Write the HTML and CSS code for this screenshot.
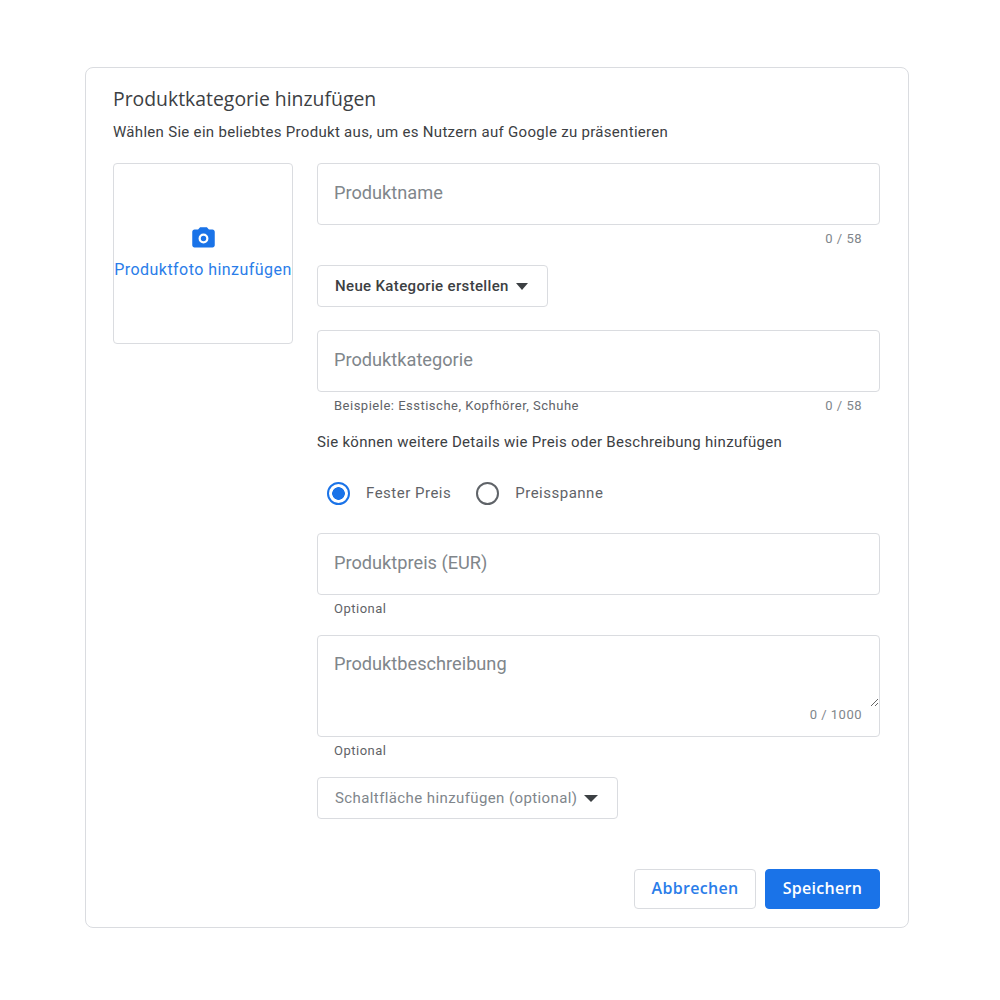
FILE: index.html
```html
<!DOCTYPE html>
<html lang="de">
<head>
<meta charset="utf-8">
<title>Produktkategorie hinzufügen</title>
<link rel="stylesheet" href="styles.css">
</head>
<body>
<main class="card">
  <h1 class="title">Produktkategorie hinzufügen</h1>
  <p class="subtitle">Wählen Sie ein beliebtes Produkt aus, um es Nutzern auf Google zu präsentieren</p>
  <div class="columns">
    <button class="photo" type="button">
      <svg class="camera" width="27" height="27" viewBox="0 0 24 24" aria-hidden="true"><path fill="#1a73e8" fill-rule="evenodd" d="M9 2 7.17 4H4c-1.1 0-2 .9-2 2v12c0 1.1.9 2 2 2h16c1.1 0 2-.9 2-2V6c0-1.1-.9-2-2-2h-3.17L15 2H9zm3 14.4a4.4 4.4 0 1 1 0-8.8 4.4 4.4 0 0 1 0 8.8z"/><circle cx="12" cy="12" r="2.4" fill="#1a73e8"/></svg>
      <span>Produktfoto hinzufügen</span>
    </button>
    <form class="fields">
      <input class="field" type="text" placeholder="Produktname">
      <div class="hints"><span></span><span class="count">0 / 58</span></div>
      <button class="dropdown dark gap-cat" type="button">Neue Kategorie erstellen<i class="caret"></i></button>
      <input class="field gap-field" type="text" placeholder="Produktkategorie">
      <div class="hints"><span>Beispiele: Esstische, Kopfhörer, Schuhe</span><span class="count">0 / 58</span></div>
      <p class="note">Sie können weitere Details wie Preis oder Beschreibung hinzufügen</p>
      <div class="radios">
        <label class="radio"><input type="radio" name="price" checked><span>Fester Preis</span></label>
        <label class="radio"><input type="radio" name="price"><span>Preisspanne</span></label>
      </div>
      <input class="field" type="text" placeholder="Produktpreis (EUR)">
      <div class="hints"><span>Optional</span></div>
      <div class="area-box">
        <textarea class="area" placeholder="Produktbeschreibung"></textarea>
        <div class="area-count">0 / 1000</div>
      </div>
      <div class="hints"><span>Optional</span></div>
      <button class="dropdown muted gap-btn" type="button">Schaltfläche hinzufügen (optional)<i class="caret"></i></button>
      <div class="actions">
        <button class="action cancel" type="button">Abbrechen</button>
        <button class="action save" type="button">Speichern</button>
      </div>
    </form>
  </div>
</main>
</body>
</html>
```
FILE: styles.css
```css
* { box-sizing: border-box; }
html, body { margin: 0; padding: 0; background: #fff; }
body { padding: 67px 0 0 85px; font-family: Roboto, "Liberation Sans", sans-serif; color: #3c4043; }
.card {
  width: 824px;
  height: 861px;
  border: 1px solid #dadce0;
  border-radius: 8px;
  padding: 20px 27px 0;
  background: #fff;
}
.title {
  margin: 0;
  font-family: "Open Sans", Roboto, sans-serif;
  font-size: 19.4px;
  line-height: 22px;
  font-weight: 400;
  color: #3c4043;
}
.subtitle {
  margin: 12px 0 0;
  font-size: 15px;
  line-height: 20px;
  letter-spacing: .3px;
  color: #3c4043;
}
.columns { display: flex; gap: 24px; margin-top: 21px; align-items: flex-start; }
.photo {
  width: 180px;
  height: 181px;
  flex: none;
  display: flex;
  flex-direction: column;
  align-items: center;
  justify-content: center;
  gap: 8px;
  padding: 0 0 2px;
  border: 1px solid #dadce0;
  border-radius: 4px;
  background: #fff;
  font: 400 16px/20px Roboto, sans-serif;
  letter-spacing: .45px;
  color: #2a7de9;
  white-space: nowrap;
}
.camera { display: block; }
.fields { flex: none; width: 563px; display: flex; flex-direction: column; align-items: flex-start; }
.field {
  display: block;
  width: 100%;
  height: 62px;
  padding: 0 16px 4px;
  border: 1px solid #dadce0;
  border-radius: 4px;
  outline: none;
  font: 400 18.2px/24px Roboto, sans-serif;
  color: #3c4043;
  background: #fff;
}
.field::placeholder, .area::placeholder { color: #80868b; opacity: 1; }
.hints {
  width: 100%;
  height: 28px;
  padding: 6px 18px 0 17px;
  display: flex;
  justify-content: space-between;
  font-size: 13px;
  line-height: 16px;
  letter-spacing: .5px;
  color: #5f6368;
}
.count { color: #80868b; }
.dropdown {
  display: flex;
  align-items: center;
  height: 42px;
  padding: 0 19px 0 17px;
  border: 1px solid #dadce0;
  border-radius: 4px;
  background: #fff;
  font: 500 15px/20px Roboto, sans-serif;
  letter-spacing: .35px;
  white-space: nowrap;
}
.dark { color: #3c4043; }
.muted { color: #80868b; font-weight: 400; letter-spacing: .4px; }
.gap-cat { margin-top: 12px; }
.gap-field { margin-top: 23px; }
.gap-btn { margin-top: 12px; }
.caret {
  width: 0;
  height: 0;
  margin-left: 7px;
  border-left: 6.5px solid transparent;
  border-right: 6.5px solid transparent;
  border-top: 7px solid #3c4043;
}
.muted .caret { border-left-width: 7px; border-right-width: 7px; }
.note { margin: 12px 0 0; font-size: 15px; line-height: 20px; letter-spacing: .3px; color: #3c4043; }
.radios { display: flex; gap: 25px; margin: 29px 0 0 10px; height: 52px; align-items: flex-start; }
.radio { display: flex; align-items: center; gap: 16px; font-size: 15px; line-height: 24px; letter-spacing: .5px; color: #5f6368; }
.radio input {
  appearance: none;
  width: 23px;
  height: 23px;
  margin: 0;
  border: 2px solid #5f6368;
  border-radius: 50%;
  background: #fff;
}
.radio input:checked {
  border-color: #1a73e8;
  background: radial-gradient(circle, #1a73e8 0 6px, #fff 6.6px);
}
.area-box {
  width: 100%;
  height: 102px;
  margin-top: 12px;
  border: 1px solid #dadce0;
  border-radius: 4px;
  display: flex;
  flex-direction: column;
}
.area {
  display: block;
  width: 100%;
  height: 71px;
  padding: 16px 16px 0;
  border: 0;
  outline: none;
  background: transparent;
  font: 400 18.2px/24px Roboto, sans-serif;
  color: #3c4043;
}
.area-count {
  padding: 0 17px 0 0;
  text-align: right;
  font-size: 13px;
  line-height: 16px;
  letter-spacing: .5px;
  color: #80868b;
}
.actions { align-self: flex-end; display: flex; gap: 9px; margin-top: 50px; }
.action {
  height: 40px;
  padding: 0 0 2px;
  border-radius: 4px;
  font: 600 16px/20px "Open Sans", Roboto, sans-serif;
  letter-spacing: .3px;
}
.cancel { width: 122px; border: 1px solid #dadce0; background: #fff; color: #2a7de9; }
.save { width: 115px; border: 1px solid #1a73e8; background: #1a73e8; color: #fff; }
```
